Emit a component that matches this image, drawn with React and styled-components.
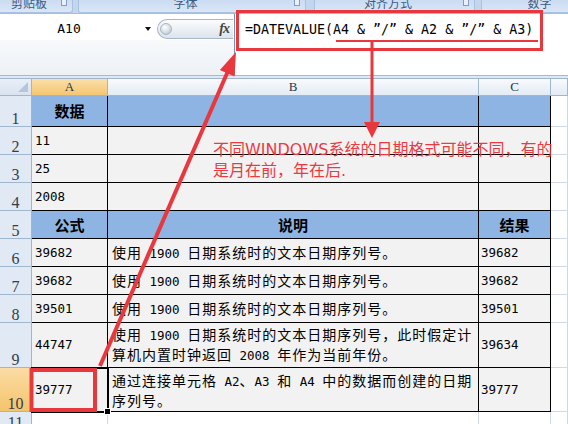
import React from "react";
import styled, { createGlobalStyle, css } from "styled-components";

const CJK = '"Noto Sans CJK SC", sans-serif';
const MONO = '"DejaVu Sans Mono", "Noto Sans CJK SC", monospace';
const RED = "#e8383d";

const GlobalStyle = createGlobalStyle`
  html, body { margin: 0; padding: 0; background: #fff; }
  #root { width: 568px; height: 424px; }
`;

const Page = styled.div`
  position: relative;
  width: 568px;
  height: 424px;
  overflow: hidden;
  background: #fff;
  display: flex;
  flex-direction: column;
  font-family: ${CJK};
`;

/* ---------- ribbon strip ---------- */
const Ribbon = styled.div`
  flex: none;
  height: 14px;
  box-sizing: border-box;
  display: flex;
  background: #c3d6ee;
  border-bottom: 1px solid #a6bedd;
  overflow: hidden;
`;
const Group = styled.div`
  flex: none;
  width: ${(p) => p.$w}px;
  margin-left: ${(p) => p.$gap}px;
  display: flex;
  align-items: flex-start;
  box-sizing: border-box;
  background: linear-gradient(#cbdcf2, #d9e6f6);
  border: 1px solid #a9c1e2;
  border-top: none;
  border-radius: 0 0 3px 3px;
  overflow: hidden;
`;
const GroupLabel = styled.span`
  flex: 1;
  text-align: center;
  font-size: 12px;
  line-height: 12px;
  margin-top: -3px;
  color: #3b5a86;
`;
const Launcher = styled.span`
  flex: none;
  width: 4px;
  height: 5px;
  margin: 0 5px 0 2px;
  border: 1px solid #7f9cc4;
  border-top: none;
  background: #e9f0fa;
`;

/* ---------- formula bar ---------- */
const FormulaBar = styled.div`
  flex: none;
  height: 62px;
  box-sizing: border-box;
  display: flex;
  border-bottom: 1px solid #a9b9cc;
`;
const NameSide = styled.div`
  flex: none;
  width: 234px;
  display: flex;
  flex-direction: column;
  background: linear-gradient(#ffffff, #edf1f6);
`;
const NameRow = styled.div`
  flex: none;
  height: 26px;
  display: flex;
  align-items: center;
  padding-top: 3px;
  box-sizing: border-box;
  background: #fff;
`;
const NameBox = styled.div`
  flex: none;
  width: 138px;
  text-align: center;
  font-family: ${MONO};
  font-size: 13px;
  line-height: 20px;
  color: #000;
`;
const DropArrow = styled.span`
  flex: none;
  margin-left: 7px;
  width: 0;
  height: 0;
  border-left: 3.5px solid transparent;
  border-right: 3.5px solid transparent;
  border-top: 4px solid #111;
`;
const Pill = styled.div`
  flex: none;
  margin-left: 6px;
  width: 76px;
  height: 20px;
  box-sizing: border-box;
  display: flex;
  align-items: center;
  border: 1px solid #a7b6c9;
  border-right: none;
  border-radius: 10px 0 0 10px;
  background: linear-gradient(#fbfcfd, #dde4ed);
`;
const Knob = styled.span`
  flex: none;
  width: 12px;
  height: 12px;
  margin-left: 2px;
  border-radius: 50%;
  background: radial-gradient(circle at 40% 35%, #ffffff, #c9d2dd 70%, #9aa8b8);
  border: 1px solid #aab6c4;
  box-sizing: border-box;
`;
const Fx = styled.span`
  margin-left: auto;
  margin-right: 4px;
  font-family: "Liberation Serif", serif;
  font-style: italic;
  font-weight: 700;
  font-size: 14px;
  color: #444;
  letter-spacing: -1px;
`;
const FormulaInput = styled.div`
  flex: 1;
  background: #fff;
  border-left: 1px solid #7e8fa4;
  padding: 6px 0 0 10px;
  font-family: ${MONO};
  font-size: 13.3px;
  line-height: 20px;
  color: #000;
  white-space: nowrap;
`;
const Band = styled.div`
  flex: none;
  height: 2px;
  background: #dfe7f2;
`;

/* ---------- sheet ---------- */
const Sheet = styled.div`
  flex: none;
  display: grid;
  grid-template-columns: 32px 76px 371px 72px 1fr;
  grid-template-rows: 18px 31px repeat(7, 28px) 45px 44px 19px;
`;
const Corner = styled.div`
  box-sizing: border-box;
  border-top: 1px solid #9eb6ce;
  border-right: 1px solid #9eb6ce;
  border-bottom: 1px solid #9eb6ce;
  background: linear-gradient(#e9eff7, #d9e3ef);
  display: flex;
  align-items: flex-end;
  justify-content: flex-end;
  padding: 0 3px 3px 0;
`;
const Tri = styled.span`
  width: 0;
  height: 0;
  border-left: 10px solid transparent;
  border-bottom: 10px solid #b4c6de;
`;
const ColHead = styled.div`
  box-sizing: border-box;
  border-top: 1px solid #9eb6ce;
  border-right: 1px solid #9eb6ce;
  border-bottom: 1px solid #9eb6ce;
  background: ${(p) =>
    p.$sel ? "linear-gradient(#fbdfa8, #f4c672)" : "linear-gradient(#f8fafd, #e4ebf4)"};
  display: flex;
  align-items: center;
  justify-content: center;
  font-family: "Liberation Serif", serif;
  font-size: 13px;
  color: #27364a;
`;
const RowHead = styled.div`
  box-sizing: border-box;
  border-right: 1px solid #9eb6ce;
  border-bottom: 1px solid #9eb6ce;
  background: ${(p) => (p.$sel ? "linear-gradient(#fbdca4, #f4c46c)" : "#e1e9f4")};
  display: flex;
  align-items: flex-end;
  justify-content: center;
  font-family: "Liberation Serif", serif;
  font-size: 16px;
  line-height: 16px;
  color: #333d4a;
  & > span { margin-bottom: -1px; }
`;

const fills = { head: "#8db4e2", grey: "#f2f2f2", white: "#ffffff" };

const Cell = styled.div`
  box-sizing: border-box;
  position: relative;
  display: flex;
  align-items: center;
  justify-content: ${(p) => (p.$center ? "center" : "flex-start")};
  padding-left: ${(p) => (p.$center ? 0 : p.$pad)}px;
  background: ${(p) => fills[p.$fill]};
  border-right: 1px solid ${(p) => (p.$plain ? "#d0d7e5" : "#000")};
  border-bottom: 1px solid ${(p) => (p.$plain ? "#d0d7e5" : "#000")};
  font-family: ${(p) => (p.$num ? MONO : CJK)};
  font-size: ${(p) => (p.$num ? "12.5px" : p.$bold ? "15px" : "14px")};
  font-weight: ${(p) => (p.$bold ? 700 : 400)};
  letter-spacing: ${(p) => (p.$num || p.$bold ? 0 : 1)}px;
  line-height: 18px;
  color: #000;
  white-space: nowrap;
  ${(p) =>
    p.$sel &&
    css`
      outline: 2px solid #000;
      outline-offset: -1px;
      z-index: 1;
      &::after {
        content: "";
        position: absolute;
        right: -4px;
        bottom: -4px;
        width: 5px;
        height: 5px;
        background: #000;
        border: 1px solid #fff;
      }
    `}
`;
const L = styled.span`
  font-family: "DejaVu Sans Mono", monospace;
  font-size: 12.5px;
  letter-spacing: 0;
`;

/* ---------- annotations ---------- */
const Overlay = styled.svg`
  position: absolute;
  left: 0;
  top: 0;
  width: 568px;
  height: 424px;
  pointer-events: none;
  z-index: 5;
`;
const Note = styled.div`
  position: absolute;
  left: 213px;
  top: 139px;
  z-index: 5;
  font-family: "DejaVu Sans", "Noto Sans CJK SC", sans-serif;
  font-size: 16px;
  line-height: 21px;
  color: #ea3a42;
  white-space: nowrap;
`;

const groups = [
  { label: "剪贴板", w: 75, gap: -2 },
  { label: "字体", w: 228, gap: 5 },
  { label: "对齐方式", w: 161, gap: 8 },
  { label: "数字", w: 130, gap: 6 },
];

const head = (t) => ({ t, kind: "head" });
const num = (t) => ({ t, num: true });
const std = (
  <span>
    使用<L> 1900 </L>日期系统时的文本日期序列号。
  </span>
);

const rows = [
  { n: 1, cells: [head("数据"), head(), head()] },
  { n: 2, cells: [num("11"), {}, {}] },
  { n: 3, cells: [num("25"), {}, {}] },
  { n: 4, cells: [num("2008"), {}, {}] },
  { n: 5, cells: [head("公式"), head("说明"), head("结果")] },
  { n: 6, cells: [num("39682"), { t: std }, num("39682")] },
  { n: 7, cells: [num("39682"), { t: std }, num("39682")] },
  { n: 8, cells: [num("39501"), { t: std }, num("39501")] },
  {
    n: 9,
    cells: [
      num("44747"),
      {
        t: (
          <span>
            使用<L> 1900 </L>日期系统时的文本日期序列号，此时假定计
            <br />
            算机内置时钟返回<L> 2008 </L>年作为当前年份。
          </span>
        ),
      },
      num("39634"),
    ],
  },
  {
    n: 10,
    sel: true,
    cells: [
      { ...num("39777"), sel: true },
      {
        t: (
          <span>
            通过连接单元格<L> A2</L>、<L>A3 </L>和<L> A4 </L>中的数据而创建的日期
            <br />
            序列号。
          </span>
        ),
      },
      num("39777"),
    ],
  },
];

const pads = [3, 4, 2];

export default function App() {
  return (
    <Page>
      <GlobalStyle />
      <Ribbon>
        {groups.map((g) => (
          <Group key={g.label} $w={g.w} $gap={g.gap}>
            <GroupLabel>{g.label}</GroupLabel>
            <Launcher />
          </Group>
        ))}
      </Ribbon>

      <FormulaBar>
        <NameSide>
          <NameRow>
            <NameBox>A10</NameBox>
            <DropArrow />
            <Pill>
              <Knob />
              <Fx>fx</Fx>
            </Pill>
          </NameRow>
        </NameSide>
        <FormulaInput>=DATEVALUE(A4 &amp; ”/” &amp; A2 &amp; ”/” &amp; A3)</FormulaInput>
      </FormulaBar>
      <Band />

      <Sheet>
        <Corner>
          <Tri />
        </Corner>
        <ColHead $sel>A</ColHead>
        <ColHead>B</ColHead>
        <ColHead>C</ColHead>
        <ColHead />

        {rows.map((r) => (
          <React.Fragment key={r.n}>
            <RowHead $sel={r.sel}>
              <span>{r.n}</span>
            </RowHead>
            {r.cells.map((c, i) => (
              <Cell
                key={i}
                $fill={c.kind === "head" ? "head" : "grey"}
                $bold={c.kind === "head"}
                $center={c.kind === "head"}
                $num={c.num}
                $pad={pads[i]}
                $sel={c.sel}
              >
                {c.t}
              </Cell>
            ))}
            <Cell $fill="white" $plain />
          </React.Fragment>
        ))}

        <RowHead>
          <span>11</span>
        </RowHead>
        <Cell $fill="white" $plain />
        <Cell $fill="white" $plain />
        <Cell $fill="white" $plain />
        <Cell $fill="white" $plain />
      </Sheet>

      <Note>
        不同WINDOWS系统的日期格式可能不同，有的
        <br />
        是月在前，年在后.
      </Note>

      <Overlay viewBox="0 0 568 424">
        <rect x="237.5" y="11.5" width="304" height="38" fill="none" stroke={RED} strokeWidth="3" />
        <line x1="336" y1="41" x2="538" y2="41" stroke={RED} strokeWidth="2" />
        <line x1="372" y1="41" x2="372" y2="124" stroke={RED} strokeWidth="3" />
        <polygon points="364,122 380,122 372,138" fill={RED} />
        <line x1="100" y1="366" x2="228" y2="71" stroke={RED} strokeWidth="4" />
        <polygon points="236,52 234.5,76.5 219.9,70" fill={RED} />
        <rect x="31.5" y="370" width="63.5" height="40" fill="none" stroke={RED} strokeWidth="4" />
      </Overlay>
    </Page>
  );
}
